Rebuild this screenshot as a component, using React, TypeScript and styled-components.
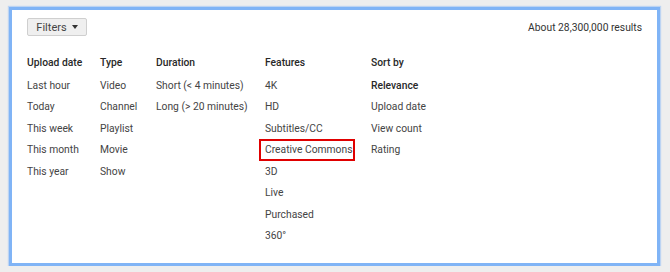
import React from 'react';
import styled, { createGlobalStyle } from 'styled-components';

const GlobalStyle = createGlobalStyle`
  html, body {
    margin: 0;
    padding: 0;
    background: #eeeeee;
    font-family: Roboto, "Liberation Sans", Arial, sans-serif;
  }
`;

interface Column {
  title: string;
  width: number;
  items: string[];
  bold?: string;
  marked?: string;
}

const columns: Column[] = [
  { title: 'Upload date', width: 73, items: ['Last hour', 'Today', 'This week', 'This month', 'This year'] },
  { title: 'Type', width: 56, items: ['Video', 'Channel', 'Playlist', 'Movie', 'Show'] },
  { title: 'Duration', width: 109, items: ['Short (< 4 minutes)', 'Long (> 20 minutes)'] },
  {
    title: 'Features',
    width: 106,
    items: ['4K', 'HD', 'Subtitles/CC', 'Creative Commons', '3D', 'Live', 'Purchased', '360°'],
    marked: 'Creative Commons',
  },
  {
    title: 'Sort by',
    width: 120,
    items: ['Relevance', 'Upload date', 'View count', 'Rating'],
    bold: 'Relevance',
  },
];

export default function App() {
  return (
    <>
      <GlobalStyle />
      <Panel>
        <TopBar>
          <FilterButton>
            Filters
            <Caret />
          </FilterButton>
          <Results>About 28,300,000 results</Results>
        </TopBar>
        <Columns>
          {columns.map((col) => (
            <Group key={col.title} $width={col.width}>
              <Heading>{col.title}</Heading>
              {col.items.map((item) => (
                <Item key={item} $bold={item === col.bold}>
                  {item === col.marked ? <Marked>{item}</Marked> : item}
                </Item>
              ))}
            </Group>
          ))}
        </Columns>
      </Panel>
    </>
  );
}

const Panel = styled.div`
  box-sizing: border-box;
  margin: 7px 0 0 9px;
  width: 651px;
  height: 259px;
  background: #fff;
  border: 3px solid #80b4f6;
  box-shadow: 0 0 1px 1px rgba(128, 180, 246, 0.45);
  padding: 8px 15px 0 15px;
`;

const TopBar = styled.div`
  display: flex;
  align-items: center;
  justify-content: space-between;
  height: 18px;
`;

const FilterButton = styled.div`
  box-sizing: border-box;
  width: 60px;
  height: 18px;
  display: flex;
  align-items: center;
  justify-content: center;
  gap: 5px;
  background: #efefef;
  border: 1px solid #cfcfcf;
  border-radius: 2px;
  font-size: 11px;
  color: #444;
`;

const Caret = styled.span`
  width: 0;
  height: 0;
  border-left: 3.5px solid transparent;
  border-right: 3.5px solid transparent;
  border-top: 4px solid #333;
`;

const Results = styled.div`
  font-size: 10.3px;
  color: #333;
  padding-top: 1px;
`;

const Columns = styled.div`
  display: flex;
  margin-top: 16px;
`;

const Group = styled.div<{ $width: number }>`
  width: ${(p) => p.$width}px;
  display: flex;
  flex-direction: column;
  font-size: 10.3px;
  line-height: 21.45px;
`;

const Heading = styled.div`
  font-weight: 500;
  color: #282828;
  margin-bottom: 1.5px;
`;

const Item = styled.div<{ $bold: boolean }>`
  color: ${(p) => (p.$bold ? '#282828' : '#444')};
  font-weight: ${(p) => (p.$bold ? 500 : 400)};
  white-space: nowrap;
`;

const Marked = styled.span`
  position: relative;

  &::after {
    content: '';
    position: absolute;
    left: -6px;
    right: -3px;
    top: -4px;
    bottom: -5px;
    border: 2px solid #e00000;
  }
`;
